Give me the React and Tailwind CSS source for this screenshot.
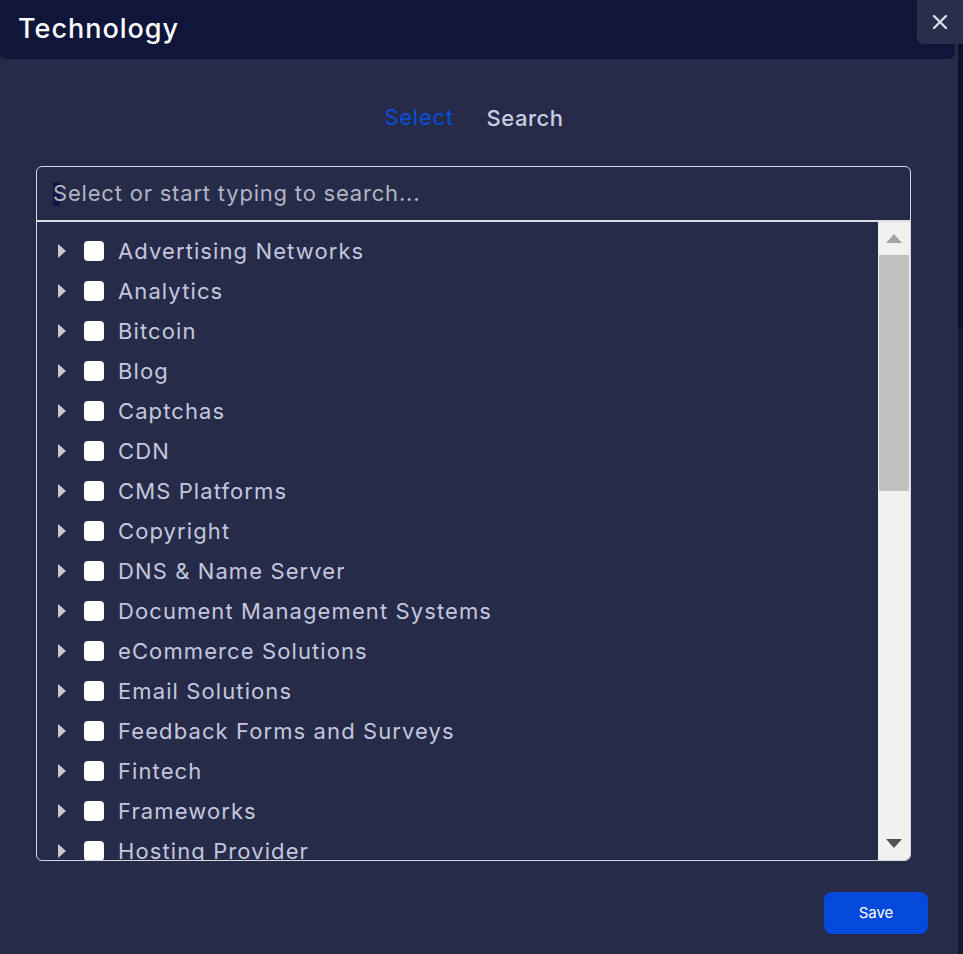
const ITEMS = [
  "Advertising Networks",
  "Analytics",
  "Bitcoin",
  "Blog",
  "Captchas",
  "CDN",
  "CMS Platforms",
  "Copyright",
  "DNS & Name Server",
  "Document Management Systems",
  "eCommerce Solutions",
  "Email Solutions",
  "Feedback Forms and Surveys",
  "Fintech",
  "Frameworks",
  "Hosting Provider",
  "Issue Trackers",
];

function Row({ label }) {
  return (
    <div className="flex items-center h-[40px] shrink-0 pl-[21px]">
      <svg width="9" height="14" viewBox="0 0 9 14" className="shrink-0">
        <path d="M0 0 L8 7 L0 14 Z" fill="#c9c9cf" />
      </svg>
      <span className="ml-[17px] w-[20px] h-[20px] rounded-[4px] bg-white shrink-0" />
      <span className="ml-[14px] text-[22px] text-[#c4c7dd] whitespace-nowrap tracking-[1.1px]">
        {label}
      </span>
    </div>
  );
}

export default function App() {
  return (
    <div
      className="w-[963px] h-[954px] bg-[#0e1128] flex overflow-hidden relative"
      style={{ fontFamily: "Inter, 'Noto Sans', sans-serif" }}
    >
      <div className="w-[958px] h-full bg-[#272b4a] flex flex-col">
        <div className="h-[59px] bg-[#10163a] rounded-b-[6px] flex items-center pl-[18px] w-[955px]">
          <h2 className="text-[27px] text-white font-medium tracking-[1px]">Technology</h2>
        </div>

        <div className="flex justify-center gap-[33px] mt-[40px] pr-[10px]">
          <button type="button" className="text-[22px] text-[#0b4fd8] tracking-[0.7px]">Select</button>
          <button type="button" className="text-[22px] text-[#c9cde2] font-medium mt-[3px] tracking-[0.5px]">Search</button>
        </div>

        <div className="ml-[36px] mt-[31px] w-[875px] h-[695px] border border-[#d6d7de] rounded-[6px] flex flex-col overflow-hidden">
          <div className="h-[55px] border-b-2 border-[#dcdde3] flex items-center pl-[16px] shrink-0">
            <span className="w-[7px] h-[24px] bg-[#111640] shrink-0" />
            <span className="text-[22px] text-[#b2b4c4] -ml-[7px] tracking-[0.8px]">Select or start typing to search...</span>
          </div>
          <div className="flex flex-1 min-h-0">
            <div className="flex-1 overflow-hidden pt-[9px] flex flex-col">
              {ITEMS.map((it) => (
                <Row key={it} label={it} />
              ))}
            </div>
            <div className="w-[32px] bg-[#f1f1f1] flex flex-col items-center">
              <div className="h-[33px] flex items-center justify-center shrink-0">
                <svg width="16" height="9" viewBox="0 0 16 9">
                  <path d="M0 9 L8 0 L16 9 Z" fill="#a3a3a3" />
                </svg>
              </div>
              <div className="w-[30px] h-[236px] bg-[#c1c1c1]" />
              <div className="flex-1" />
              <div className="h-[33px] flex items-center justify-center shrink-0">
                <svg width="16" height="9" viewBox="0 0 16 9">
                  <path d="M0 0 L16 0 L8 9 Z" fill="#505050" />
                </svg>
              </div>
            </div>
          </div>
        </div>

        <div className="flex justify-end pr-[30px] mt-[31px]">
          <button
            type="button"
            className="w-[104px] h-[42px] rounded-[8px] bg-[#0548dc] text-white text-[15px]"
          >
            Save
          </button>
        </div>
      </div>

      <div className="w-[5px] h-full flex flex-col">
        <div className="h-[327px] bg-[#0e1128]" />
        <div className="flex-1 bg-[#161a30]" />
      </div>

      <button
        type="button"
        className="absolute top-0 right-0 w-[46px] h-[44px] bg-[#2a2e4c] rounded-bl-[6px] flex items-center justify-center text-[#d8dae6]"
        aria-label="Close"
      >
        <svg width="16" height="16" viewBox="0 0 16 16" stroke="currentColor" strokeWidth="2.4" strokeLinecap="round">
          <path d="M2 2 L14 14 M14 2 L2 14" />
        </svg>
      </button>
    </div>
  );
}
